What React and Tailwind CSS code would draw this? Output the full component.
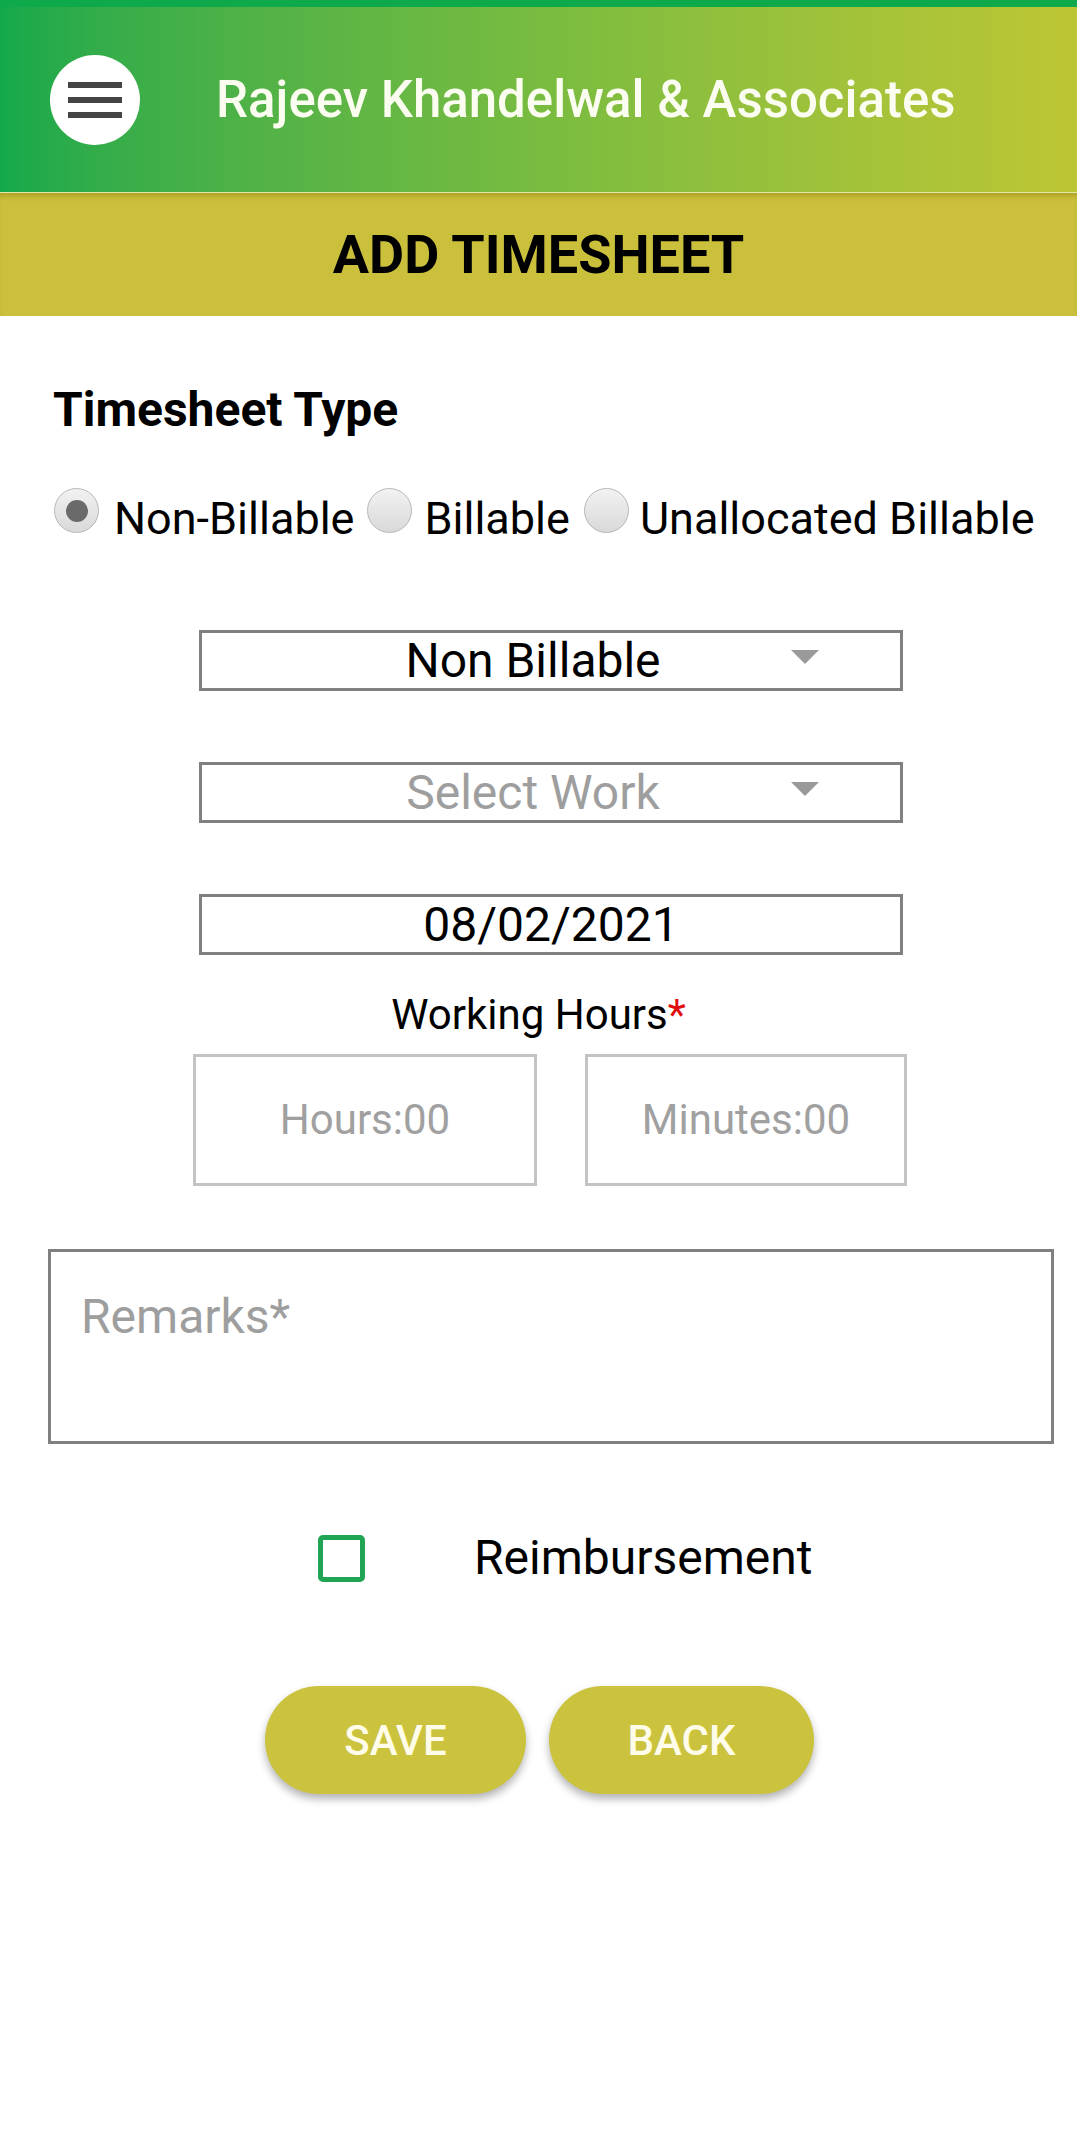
import React from 'react';

function Radio({ checked }) {
  return (
    <span className="relative flex h-[45px] w-[45px] shrink-0 items-center justify-center rounded-full border border-[#b8b8b8] bg-gradient-to-b from-[#f2f2f2] to-[#d9d9d9] -translate-y-[8px]">
      {checked && <span className="h-[22px] w-[22px] rounded-full bg-[#6a6a6a]" />}
    </span>
  );
}

function SelectBox({ value, placeholder }) {
  return (
    <div className="relative flex h-[61px] w-[704px] items-center justify-center border-[3px] border-[#808080] pr-[36px]">
      <span className={`text-[48px] leading-none ${placeholder ? 'text-[#9e9e9e]' : 'text-black'}`}>{value}</span>
      <span className="absolute right-[81px] top-[17px] h-0 w-0 border-x-[14px] border-t-[14px] border-x-transparent border-t-[#9a9a9a]" />
    </div>
  );
}

export default function App() {
  return (
    <div className="min-h-[2148px] w-[1077px] bg-white" style={{ fontFamily: 'Roboto, "Noto Sans", sans-serif' }}>
      <header className="flex h-[192px] items-center border-t-[7px] border-[#0ea94b] bg-gradient-to-r from-[#12a94b] via-[#78bc40] to-[#bdc634]">
        <button className="ml-[50px] flex h-[90px] w-[90px] flex-col items-center justify-center gap-[9px] rounded-full bg-white">
          <span className="h-[6px] w-[54px] bg-[#444]" />
          <span className="h-[6px] w-[54px] bg-[#444]" />
          <span className="h-[6px] w-[54px] bg-[#444]" />
        </button>
        <h1 className="ml-[76px] text-[51px] font-medium leading-none text-[#fbfdf0]">Rajeev Khandelwal &amp; Associates</h1>
      </header>
      <div className="flex h-[124px] items-center justify-center border-t border-[#e2e9a8] bg-[#cbc03b] shadow-[inset_0_6px_6px_-4px_rgba(120,100,0,0.45)]">
        <h2 className="text-[54px] font-bold leading-none text-black">ADD TIMESHEET</h2>
      </div>

      <div className="flex flex-col">
        <h3 className="ml-[53px] mt-[70px] text-[48px] font-bold leading-none text-black">Timesheet Type</h3>
        <div className="ml-[54px] mt-[62px] flex items-center text-[45px] leading-none text-black">
          <Radio checked />
          <span className="ml-[15px]">Non-Billable</span>
          <span className="ml-[13px]"><Radio /></span>
          <span className="ml-[12px]">Billable</span>
          <span className="ml-[14px]"><Radio /></span>
          <span className="ml-[11px]">Unallocated Billable</span>
        </div>

        <div className="ml-[199px] mt-[89px] flex flex-col gap-[71px]">
          <SelectBox value="Non Billable" />
          <SelectBox value="Select Work" placeholder />
          <div className="flex h-[61px] w-[704px] items-center justify-center border-[3px] border-[#808080]">
            <span className="text-[48px] leading-none text-black">08/02/2021</span>
          </div>
        </div>

        <div className="mt-[39px] self-center text-[42px] leading-none text-black">
          Working Hours<span className="text-[#e01010]">*</span>
        </div>
        <div className="ml-[193px] mt-[18px] flex gap-[48px]">
          <div className="flex h-[132px] w-[344px] items-center justify-center border-[3px] border-[#c4c4c4]">
            <span className="text-[42px] leading-none text-[#a0a0a0]">Hours:00</span>
          </div>
          <div className="flex h-[132px] w-[322px] items-center justify-center border-[3px] border-[#c4c4c4]">
            <span className="text-[42px] leading-none text-[#a0a0a0]">Minutes:00</span>
          </div>
        </div>

        <div className="ml-[48px] mt-[63px] h-[195px] w-[1006px] border-[3px] border-[#808080] px-[30px] pt-[41px]">
          <span className="text-[48px] leading-none text-[#9e9e9e]">Remarks*</span>
        </div>

        <div className="mt-[90px] flex items-center">
          <span className="ml-[318px] h-[47px] w-[47px] rounded-[5px] border-[5px] border-[#1fa553]" />
          <span className="ml-[109px] text-[48px] leading-none text-black">Reimbursement</span>
        </div>

        <div className="mt-[104px] flex gap-[23px] pl-[265px]">
          <button className="h-[108px] w-[261px] rounded-full bg-[#cbc23d] text-[42px] font-medium text-[#fffdea] shadow-[0_5px_8px_rgba(0,0,0,0.3)]">SAVE</button>
          <button className="h-[108px] w-[265px] rounded-full bg-[#cbc23d] text-[42px] font-medium text-[#fffdea] shadow-[0_5px_8px_rgba(0,0,0,0.3)]">BACK</button>
        </div>
      </div>
    </div>
  );
}
